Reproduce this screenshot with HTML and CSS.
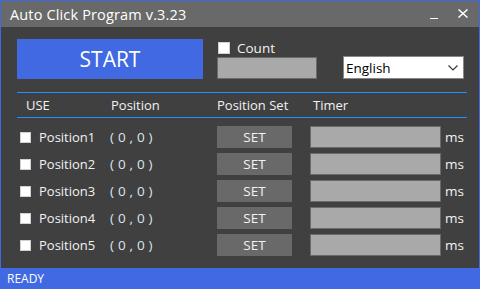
FILE: index.html
```html
<!DOCTYPE html>
<html>
<head>
<meta charset="utf-8">
<link rel="stylesheet" href="styles.css">
</head>
<body>
<div class="window">
  <div class="titlebar">
    <span class="title">Auto Click Program v.3.23</span>
    <div class="controls">
      <span class="min"></span>
      <svg class="close" width="10" height="9" viewBox="0 0 10 9"><path d="M0.5 0.5L9.5 8.5M9.5 0.5L0.5 8.5" stroke="#fff" stroke-width="1.5"/></svg>
    </div>
  </div>
  <div class="content">
    <div class="top">
      <button class="start">START</button>
      <div class="count">
        <label class="chk"><span class="box"></span><span>Count</span></label>
        <div class="field count-field"></div>
      </div>
      <div class="select">
        <span>English</span>
        <svg width="10" height="6" viewBox="0 0 10 6"><path d="M0.5 0.5L5 5L9.5 0.5" stroke="#333" stroke-width="1.1" fill="none"/></svg>
      </div>
    </div>
    <div class="table">
      <div class="head">
        <span class="c-use">USE</span>
        <span class="c-pos">Position</span>
        <span class="c-set">Position Set</span>
        <span class="c-timer">Timer</span>
      </div>
      <div class="rows">
        <div class="row"><label class="c-use chk"><span class="box"></span><span>Position1</span></label><span class="c-pos coord">( 0 , 0 )</span><span class="c-set"><button class="set">SET</button></span><span class="c-timer"><span class="field timer"></span><span class="ms">ms</span></span></div>
        <div class="row"><label class="c-use chk"><span class="box"></span><span>Position2</span></label><span class="c-pos coord">( 0 , 0 )</span><span class="c-set"><button class="set">SET</button></span><span class="c-timer"><span class="field timer"></span><span class="ms">ms</span></span></div>
        <div class="row"><label class="c-use chk"><span class="box"></span><span>Position3</span></label><span class="c-pos coord">( 0 , 0 )</span><span class="c-set"><button class="set">SET</button></span><span class="c-timer"><span class="field timer"></span><span class="ms">ms</span></span></div>
        <div class="row"><label class="c-use chk"><span class="box"></span><span>Position4</span></label><span class="c-pos coord">( 0 , 0 )</span><span class="c-set"><button class="set">SET</button></span><span class="c-timer"><span class="field timer"></span><span class="ms">ms</span></span></div>
        <div class="row"><label class="c-use chk"><span class="box"></span><span>Position5</span></label><span class="c-pos coord">( 0 , 0 )</span><span class="c-set"><button class="set">SET</button></span><span class="c-timer"><span class="field timer"></span><span class="ms">ms</span></span></div>
      </div>
    </div>
  </div>
  <div class="status">READY</div>
</div>
</body>
</html>
```
FILE: styles.css
```css
* { box-sizing: border-box; }
html, body { margin: 0; padding: 0; }
body {
  width: 480px;
  height: 289px;
  overflow: hidden;
  font-family: "Open Sans", "Noto Sans", sans-serif;
  color: #f2f2f2;
  background: #404040;
}
.window {
  width: 480px;
  height: 289px;
  border: 1px solid #4169e1;
  border-bottom: none;
  display: flex;
  flex-direction: column;
  background: #404040;
}
.titlebar {
  height: 26px;
  flex: none;
  background: #696969;
  display: flex;
  align-items: center;
  justify-content: space-between;
  padding: 0 11px 0 9px;
}
.title { font-size: 14.5px; color: #fff; letter-spacing: 0.15px; }
.controls { display: flex; align-items: center; gap: 20px; }
.min { width: 8px; height: 1px; background: #fff; margin-top: 8px; }
.close { display: block; margin-top: -2px; }
.content {
  flex: 1;
  padding: 12px 12px 0 16px;
}
.top {
  display: flex;
  align-items: flex-start;
  height: 41px;
}
.start {
  width: 186px;
  height: 40px;
  background: #4169e1;
  border: none;
  color: #fff;
  font-family: inherit;
  font-size: 21px;
  padding: 0;
  margin: 0;
}
.count {
  margin-left: 14px;
  display: flex;
  flex-direction: column;
  width: 100px;
}
.chk { display: flex; align-items: center; font-size: 13px; }
.box {
  width: 12px; height: 12px;
  background: #fff;
  border: 1px solid #d0d0d0;
  flex: none;
}
.count .chk { height: 18px; margin-top: 0; gap: 7px; padding-left: 1px; font-size: 13.5px; }
.field {
  background: #a9a9a9;
  border: 1px solid #6a6a6a;
}
.count-field { height: 22px; width: 100px; }
.select {
  margin-left: 26px;
  margin-top: 17px;
  width: 121px;
  height: 23px;
  background: #fff;
  border: 1px solid #888;
  color: #000;
  font-size: 13.5px;
  display: flex;
  align-items: center;
  justify-content: space-between;
  padding: 0 5px 0 2px;
}
.table {
  margin-top: 12px;
  width: 450px;
  border-top: 1px solid #1e90ff;
}
.head {
  height: 25px;
  border-bottom: 1px solid #1e90ff;
  display: flex;
  align-items: center;
  font-size: 13px;
}
.c-use { width: 93px; flex: none; }
.c-pos { width: 107px; flex: none; }
.c-set { width: 93px; flex: none; }
.c-timer { flex: 1; display: flex; align-items: center; }
.head .c-use { padding-left: 9px; }
.head .c-pos { padding-left: 1px; }
.head .c-timer { padding-left: 3px; }
.rows {
  padding-top: 8px;
  display: flex;
  flex-direction: column;
  gap: 5px;
}
.row {
  height: 22px;
  display: flex;
  align-items: center;
  font-size: 13.5px;
}
.row .chk { gap: 8px; padding-left: 3px; }
.row .box { width: 11px; height: 11px; }
.coord { color: #dce4f0; font-size: 13.5px; letter-spacing: 0.2px; }
.set {
  width: 75px;
  height: 22px;
  background: #696969;
  border: none;
  color: #f2f2f2;
  font-family: inherit;
  font-size: 13.5px;
  padding: 0;
  margin: 0;
}
.timer { width: 131px; height: 22px; display: block; }
.ms { margin-left: 4px; font-size: 13.5px; }
.status {
  height: 21px;
  flex: none;
  background: #4169e1;
  font-size: 12px;
  color: #fff;
  display: flex;
  align-items: center;
  margin: 0 -1px;
  padding-left: 7px;
}
```
